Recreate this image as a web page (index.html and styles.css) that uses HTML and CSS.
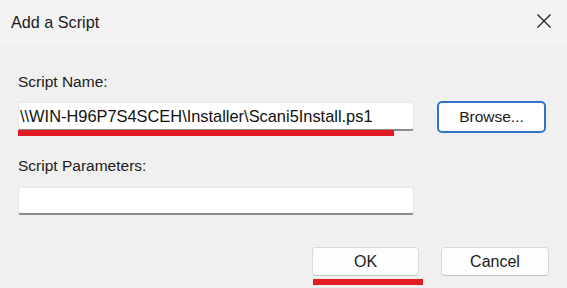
FILE: index.html
```html
<!DOCTYPE html>
<html lang="en">
<head>
<meta charset="utf-8">
<title>Add a Script</title>
<link rel="stylesheet" href="styles.css">
</head>
<body>
<div class="dialog">
  <div class="titlebar">
    <span class="title">Add a Script</span>
    <span class="close" aria-label="Close">
      <svg width="14" height="14" viewBox="0 0 14 14"><path d="M0.5 0.5 L13.5 13.5 M13.5 0.5 L0.5 13.5" stroke="#1c1c1c" stroke-width="1.2" fill="none"/></svg>
    </span>
  </div>
  <div class="content">
    <div class="label first">Script Name:</div>
    <div class="field-row">
      <div class="field">
        <input class="textbox name" type="text" readonly value="\\WIN-H96P7S4SCEH\Installer\Scani5Install.ps1">
        <div class="mark mark-name"></div>
      </div>
      <button class="btn browse" type="button">Browse...</button>
    </div>
    <div class="label params-label">Script Parameters:</div>
    <input class="textbox params" type="text" readonly value="">
    <div class="actions">
      <div class="ok-wrap">
        <button class="btn ok" type="button">OK</button>
        <div class="mark mark-ok"></div>
      </div>
      <button class="btn cancel" type="button">Cancel</button>
    </div>
  </div>
</div>
</body>
</html>
```

FILE: styles.css
```css
html, body {
  margin: 0;
  padding: 0;
}
body {
  width: 567px;
  height: 288px;
  overflow: hidden;
  background: #f0f0f0;
  font-family: "Liberation Sans", Arial, sans-serif;
  color: #1b1b1b;
}
.dialog {
  width: 567px;
  height: 288px;
  display: flex;
  flex-direction: column;
}
.titlebar {
  height: 45px;
  display: flex;
  align-items: center;
  padding: 0 16px 0 11px;
  background: #f3f3f3;
}
.title {
  font-size: 16.2px;
  color: #1a1a1a;
}
.close {
  margin-left: auto;
  display: flex;
  margin-top: -3px;
}
.content {
  padding: 0 18px;
}
.label {
  font-size: 15.5px;
  line-height: 18px;
  color: #1b1b1b;
}
.label.first {
  margin-top: 28px;
}
.field-row {
  display: flex;
  align-items: flex-start;
  margin-top: 11px;
}
.field {
  width: 396px;
  display: flex;
  flex-direction: column;
}
.textbox {
  box-sizing: border-box;
  width: 396px;
  height: 29px;
  margin: 0;
  padding: 0 1px;
  border: 1px solid #e9e9e9;
  border-bottom: 2px solid #8c8c8c;
  border-radius: 3px;
  background: #ffffff;
  font-family: "Liberation Sans", Arial, sans-serif;
  font-size: 16.4px;
  color: #111111;
  outline: none;
  -webkit-appearance: none;
  appearance: none;
}
.mark {
  height: 6px;
  background: #e31b22;
}
.mark-name {
  width: 376px;
  margin-top: -1px;
}
.btn {
  box-sizing: border-box;
  margin: 0;
  padding: 0;
  font-family: "Liberation Sans", Arial, sans-serif;
  font-size: 16px;
  color: #1b1b1b;
  background: #fdfdfd;
  border: 1px solid #d9d9d9;
  border-bottom-color: #c4c4c4;
  border-radius: 4px;
  -webkit-appearance: none;
  appearance: none;
}
.browse {
  width: 109px;
  height: 32px;
  margin-left: 23px;
  margin-top: -1px;
  font-size: 15.5px;
  background: #ffffff;
  border: 2px solid #2f76c9;
  border-radius: 5px;
}
.params-label {
  margin-top: 21px;
}
.params {
  margin-top: 12px;
  height: 28px;
}
.actions {
  margin-top: 32px;
  display: flex;
  justify-content: flex-end;
  align-items: flex-start;
  gap: 22px;
}
.ok-wrap {
  display: flex;
  flex-direction: column;
  width: 107px;
}
.ok {
  width: 107px;
  height: 29px;
}
.mark-ok {
  width: 110px;
  margin-left: 1px;
  margin-top: 3px;
}
.cancel {
  width: 108px;
  height: 29px;
}
```
